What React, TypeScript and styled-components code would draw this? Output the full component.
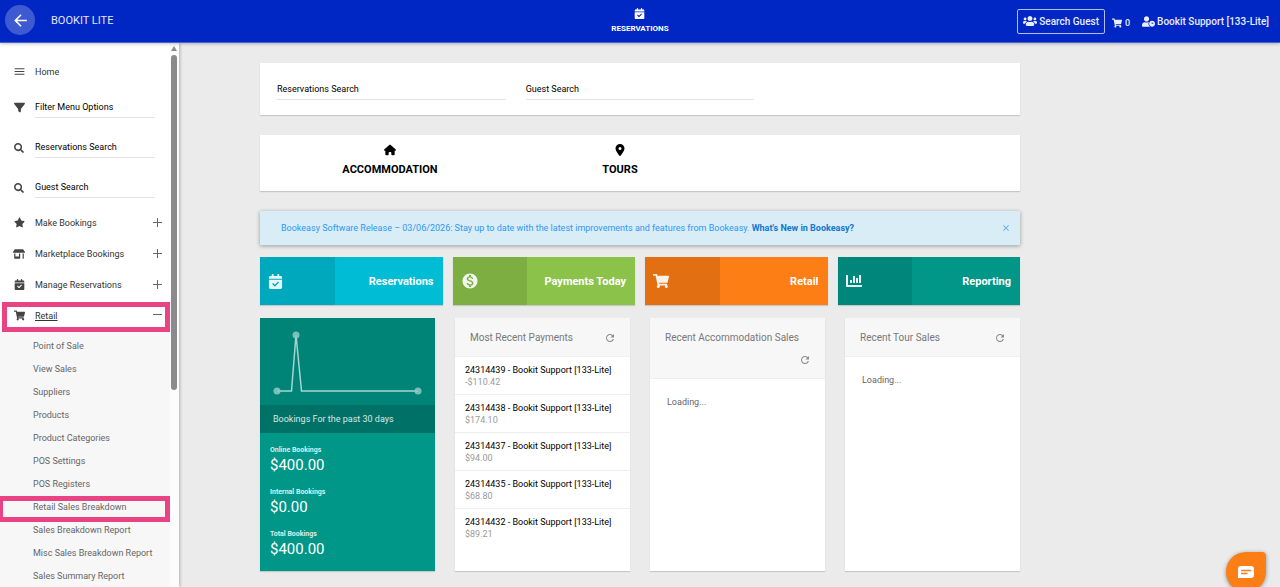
import React from "react";
import styled, { createGlobalStyle } from "styled-components";
import { FaCalendarCheck, FaFilter, FaHouse, FaLocationDot, FaStar } from "react-icons/fa6";
import { FaChartBar, FaSearch, FaShoppingCart, FaStoreAlt, FaUserClock, FaUsers } from "react-icons/fa";
import { MdArrowBack, MdClose, MdMenu, MdMonetizationOn, MdRefresh } from "react-icons/md";

const GlobalStyle = createGlobalStyle`
  *, *::before, *::after { box-sizing: border-box; }
  body {
    margin: 0;
    background: #ebebeb;
    color: #000;
    font-family: Roboto, "Liberation Sans", sans-serif;
    font-size: 9px;
  }
  button, input { font: inherit; color: inherit; }
  button { border: 0; padding: 0; background: none; cursor: pointer; }
  a { color: inherit; text-decoration: none; }
  ul { list-style: none; margin: 0; padding: 0; }
  h2, p { margin: 0; }
  svg { display: block; flex: none; }
`;

const Shell = styled.div`
  display: flex;
  flex-direction: column;
  height: 100vh;
  overflow: hidden;
`;

/* Top bar */

const TopBar = styled.header`
  display: grid;
  grid-template-columns: 1fr auto 1fr;
  align-items: center;
  flex: none;
  height: 43px;
  padding: 0 5px 2px;
  background: #0026c4;
  border-bottom: 1px solid #4a62cc;
  box-shadow: 0 1px 3px rgba(0, 0, 0, 0.25);
  color: #fff;
  position: relative;
  z-index: 2;
`;

const Brand = styled.div`
  display: flex;
  align-items: center;
  gap: 16px;
  font-size: 11px;
  color: #e3e8fa;
`;

const BackButton = styled.button`
  display: grid;
  place-items: center;
  width: 30px;
  height: 30px;
  border-radius: 50%;
  background: #3e5ad3;
  color: #fff;
`;

const TopLink = styled.a`
  display: flex;
  flex-direction: column;
  align-items: center;
  gap: 4px;
  padding-top: 3px;
  font-size: 8px;
  line-height: 12px;
  font-weight: 700;
`;

const Account = styled.div`
  display: flex;
  align-items: center;
  justify-content: flex-end;
  padding: 2px 6px 0 0;
  font-size: 10px;
  font-weight: 500;
  color: #e9edfb;
`;

const GuestButton = styled.button`
  display: flex;
  align-items: center;
  gap: 2px;
  height: 25px;
  padding: 0 5px;
  border: 1px solid #b3beee;
  border-radius: 2px;
`;

const CartLink = styled.a`
  display: flex;
  align-items: center;
  gap: 3px;
  margin: 3px 12px 0 7px;
  font-size: 9px;
`;

const UserLink = styled.a`
  display: flex;
  align-items: center;
  gap: 2px;
`;

/* Sidebar */

const Body = styled.div`
  display: flex;
  flex: 1;
  min-height: 0;
`;

const Sidebar = styled.aside`
  display: flex;
  flex: none;
  width: 179px;
  background: #fff;
  box-shadow: 1px 0 3px rgba(0, 0, 0, 0.25);
`;

const Menu = styled.nav`
  flex: 1;
  min-width: 0;
  padding-top: 14px;
  overflow: hidden;
  color: #333;
`;

const ScrollTrack = styled.div`
  display: flex;
  flex-direction: column;
  align-items: center;
  width: 9px;
  padding: 3px 2px 0 0;
  background: #fcfcfc;
`;

const ScrollThumb = styled.div`
  width: 6px;
  height: 62%;
  margin-top: 3px;
  border-radius: 3px;
  background: #8b8b8b;
`;

const MenuIcon = styled.i`
  display: grid;
  place-items: center;
  flex: none;
  width: 12px;
  color: #444;
`;

const HomeLink = styled.a`
  display: flex;
  align-items: center;
  gap: 10px;
  height: 29px;
  padding-left: 13px;
`;

const Field = styled.label`
  display: flex;
  align-items: center;
  gap: 10px;
  height: 40px;
  padding: 11px 15px 8px 13px;
`;

const LineInput = styled.input`
  flex: 1;
  min-width: 0;
  width: 100%;
  height: 21px;
  padding: 0;
  border: 0;
  border-bottom: 1px solid #e2e2e2;
  border-radius: 0;
  background: transparent;
  outline: 0;
  &::placeholder { color: #000; opacity: 1; }
`;

const Groups = styled.div`
  padding-top: 1px;
`;

const Group = styled.button<{ $open?: boolean }>`
  position: relative;
  display: flex;
  align-items: center;
  gap: 10px;
  width: 100%;
  height: 31px;
  padding: 0 8px 0 13px;
  text-align: left;
  span { flex: 1; text-decoration: ${(p) => (p.$open ? "underline" : "none")}; }
`;

const Submenu = styled.ul`
  padding-top: 4px;
  background: #f7f7f7;
  color: #666;
`;

const SubItem = styled.li`
  position: relative;
`;

const SubLink = styled.a`
  display: block;
  padding-left: 33px;
  line-height: 23px;
`;

const Marker = styled.i<{ $inset: string }>`
  position: absolute;
  inset: ${(p) => p.$inset};
  border: 5px solid #e94383;
  pointer-events: none;
`;

/* Main column */

const Main = styled.main`
  flex: 1;
  min-width: 0;
  overflow: hidden auto;
  scrollbar-width: none;
  padding: 20px 179px 16px 0;
`;

const Content = styled.div`
  max-width: 760px;
  margin: 0 auto;
`;

const Panel = styled.section`
  background: #fff;
  box-shadow: 0 1px 1px rgba(0, 0, 0, 0.15);
`;

const SearchPanel = styled(Panel)`
  display: grid;
  grid-template-columns: repeat(3, 1fr);
  gap: 20px;
  padding: 16px 17px 15px;
`;

const TypePanel = styled(Panel)`
  display: grid;
  grid-template-columns: repeat(3, 1fr);
  height: 56px;
  margin: 20px 0;
  padding: 9px 55px 0 15px;
`;

const TypeLink = styled.a`
  display: flex;
  flex-direction: column;
  align-items: center;
  gap: 7px;
  font-size: 11px;
  line-height: 14px;
  font-weight: 700;
`;

const Notice = styled.div`
  display: flex;
  align-items: center;
  height: 34px;
  padding: 0 9px 0 21px;
  border-radius: 1px;
  background: #d9edf7;
  box-shadow: 0 1px 4px rgba(0, 0, 0, 0.35);
  color: #2f97f3;
  p { flex: 1; }
  a { color: #1177cf; font-weight: 700; }
  button { color: #5aa8ec; }
`;

const Tiles = styled.div`
  display: grid;
  grid-template-columns: repeat(4, 1fr);
  gap: 10px;
  margin: 12px 0 13px;
`;

const Tile = styled.a<{ $dark: string; $light: string }>`
  display: flex;
  height: 48px;
  background: ${(p) => p.$light};
  box-shadow: 0 1px 1px rgba(0, 0, 0, 0.15);
  color: #fff;
  font-size: 11px;
  font-weight: 700;
  i {
    display: flex;
    align-items: center;
    width: 41%;
    padding-left: 8px;
    background: ${(p) => p.$dark};
    color: rgba(255, 255, 255, 0.9);
  }
  span {
    flex: 1;
    padding: 1px 9px 0 0;
    text-align: right;
    line-height: 47px;
  }
`;

const Cards = styled.div`
  display: grid;
  grid-template-columns: repeat(4, 1fr);
  gap: 20px;
  min-height: 253px;
`;

const ChartCard = styled(Panel)`
  background: #009688;
  color: #fff;
`;

const Chart = styled.svg`
  width: 100%;
  height: 87px;
  background: #008477;
`;

const ChartTitle = styled.h2`
  padding: 1px 0 0 13px;
  background: #007166;
  color: #d5e9e7;
  font-size: 9px;
  font-weight: 400;
  line-height: 27px;
`;

const Stats = styled.dl`
  display: grid;
  gap: 12px;
  margin: 0;
  padding: 12px 10px;
  dt { font-size: 7px; font-weight: 700; line-height: 10px; color: #d9efed; }
  dd { margin: 0; font-size: 15px; line-height: 20px; }
`;

const CardHead = styled.div`
  display: flex;
  flex-wrap: wrap;
  align-items: center;
  padding: 9px 14px 7px 15px;
  background: #f7f7f7;
  border-bottom: 1px solid #eee;
  color: #777;
  h2 { margin-right: 10px; font-size: 10px; font-weight: 400; line-height: 22px; }
  button { display: grid; place-items: center; height: 22px; margin-left: auto; color: #888; }
`;

const Payment = styled.li`
  height: 38px;
  padding: 7px 10px 0;
  line-height: 12px;
  border-bottom: 1px solid #eee;
  color: #9a9a9a;
  &:last-child { border-bottom: 0; }
  a { display: block; color: #000; }
`;

const Loading = styled.p`
  padding: 17px;
  line-height: 12px;
  color: #666;
`;

const ChatButton = styled.button`
  position: fixed;
  right: 14px;
  bottom: -5px;
  display: grid;
  place-items: center;
  width: 40px;
  height: 40px;
  border-radius: 20px 4px 20px 20px;
  background: #fd7e14;
  box-shadow: 0 1px 4px rgba(0, 0, 0, 0.4);
`;

const groups = [
  { label: "Make Bookings", icon: <FaStar size={11} /> },
  { label: "Marketplace Bookings", icon: <FaStoreAlt size={12} /> },
  { label: "Manage Reservations", icon: <FaCalendarCheck size={11} /> },
  { label: "Retail", icon: <FaShoppingCart size={11} />, open: true },
];

const retailLinks = [
  "Point of Sale",
  "View Sales",
  "Suppliers",
  "Products",
  "Product Categories",
  "POS Settings",
  "POS Registers",
  "Retail Sales Breakdown",
  "Sales Breakdown Report",
  "Misc Sales Breakdown Report",
  "Sales Summary Report",
];

const tiles = [
  { label: "Reservations", dark: "#00a8be", light: "#00bcd4", icon: <FaCalendarCheck size={15} /> },
  { label: "Payments Today", dark: "#7cae41", light: "#8bc34a", icon: <MdMonetizationOn size={18} /> },
  { label: "Retail", dark: "#e27012", light: "#fd7e14", icon: <FaShoppingCart size={16} /> },
  { label: "Reporting", dark: "#00867a", light: "#009688", icon: <FaChartBar size={16} /> },
];

const stats = [
  ["Online Bookings", "$400.00"],
  ["Internal Bookings", "$0.00"],
  ["Total Bookings", "$400.00"],
];

const payments = [
  ["24314439", "-$110.42"],
  ["24314438", "$174.10"],
  ["24314437", "$94.00"],
  ["24314435", "$68.80"],
  ["24314432", "$89.21"],
];

function Toggle({ open }: { open?: boolean }) {
  return (
    <svg width="9" height="9" viewBox="0 0 9 9" stroke="#666" fill="none" aria-hidden>
      <path d={open ? "M0 3.5H9" : "M0 4.5H9M4.5 0V9"} />
    </svg>
  );
}

function CardHeader({ title }: { title: string }) {
  return (
    <CardHead>
      <h2>{title}</h2>
      <button aria-label={`Refresh ${title}`}>
        <MdRefresh size={12} />
      </button>
    </CardHead>
  );
}

export default function App() {
  return (
    <Shell>
      <GlobalStyle />
      <TopBar>
        <Brand>
          <BackButton aria-label="Back">
            <MdArrowBack size={19} />
          </BackButton>
          <span>BOOKIT LITE</span>
        </Brand>
        <TopLink href="#">
          <FaCalendarCheck size={11} />
          RESERVATIONS
        </TopLink>
        <Account>
          <GuestButton>
            <FaUsers size={14} />
            Search Guest
          </GuestButton>
          <CartLink href="#">
            <FaShoppingCart size={10} />0
          </CartLink>
          <UserLink href="#">
            <FaUserClock size={13} />
            Bookit Support [133-Lite]
          </UserLink>
        </Account>
      </TopBar>
      <Body>
        <Sidebar>
          <Menu>
            <HomeLink href="#">
              <MenuIcon>
                <MdMenu size={13} />
              </MenuIcon>
              Home
            </HomeLink>
            <Field>
              <MenuIcon>
                <FaFilter size={11} />
              </MenuIcon>
              <LineInput placeholder="Filter Menu Options" aria-label="Filter Menu Options" />
            </Field>
            <Field>
              <MenuIcon>
                <FaSearch size={10} />
              </MenuIcon>
              <LineInput placeholder="Reservations Search" aria-label="Reservations Search" />
            </Field>
            <Field>
              <MenuIcon>
                <FaSearch size={10} />
              </MenuIcon>
              <LineInput placeholder="Guest Search" aria-label="Guest Search" />
            </Field>
            <Groups>
              {groups.map((g) => (
                <Group key={g.label} $open={g.open} aria-expanded={!!g.open}>
                  <MenuIcon>{g.icon}</MenuIcon>
                  <span>{g.label}</span>
                  <Toggle open={g.open} />
                  {g.open && <Marker $inset="2px 0 -1px 2px" />}
                </Group>
              ))}
            </Groups>
            <Submenu>
              {retailLinks.map((label) => (
                <SubItem key={label}>
                  <SubLink href="#">{label}</SubLink>
                  {label === "Retail Sales Breakdown" && <Marker $inset="0 0 -3px -2px" />}
                </SubItem>
              ))}
            </Submenu>
          </Menu>
          <ScrollTrack aria-hidden>
            <svg width="6" height="6" viewBox="0 0 6 6" fill="#8b8b8b">
              <path d="M3 0L6 5H0Z" />
            </svg>
            <ScrollThumb />
          </ScrollTrack>
        </Sidebar>
        <Main>
          <Content>
            <SearchPanel>
              <LineInput placeholder="Reservations Search" aria-label="Reservations Search" />
              <LineInput placeholder="Guest Search" aria-label="Guest Search" />
            </SearchPanel>
            <TypePanel>
              <TypeLink href="#">
                <FaHouse size={12} />
                ACCOMMODATION
              </TypeLink>
              <TypeLink href="#">
                <FaLocationDot size={12} />
                TOURS
              </TypeLink>
            </TypePanel>
            <Notice role="status">
              <p>
                Bookeasy Software Release – 03/06/2026: Stay up to date with the latest improvements and features
                from Bookeasy. <a href="#">What's New in Bookeasy?</a>
              </p>
              <button aria-label="Dismiss">
                <MdClose size={10} />
              </button>
            </Notice>
            <Tiles>
              {tiles.map((t) => (
                <Tile key={t.label} href="#" $dark={t.dark} $light={t.light}>
                  <i>{t.icon}</i>
                  <span>{t.label}</span>
                </Tile>
              ))}
            </Tiles>
            <Cards>
              <ChartCard>
                <Chart viewBox="0 0 175 87" preserveAspectRatio="none" aria-label="Bookings chart">
                  <path
                    d="M17 73H31.5L36 17L41.500 73H158"
                    fill="none"
                    stroke="#a9d3cf"
                    strokeWidth="1.5"
                  />
                  <g fill="#8cc9c3" fillOpacity="0.85">
                    <circle cx="17" cy="73" r="3.500" />
                    <circle cx="36" cy="17" r="3.500" />
                    <circle cx="158" cy="73" r="3.500" />
                  </g>
                </Chart>
                <ChartTitle>Bookings For the past 30 days</ChartTitle>
                <Stats>
                  {stats.map(([label, value]) => (
                    <div key={label}>
                      <dt>{label}</dt>
                      <dd>{value}</dd>
                    </div>
                  ))}
                </Stats>
              </ChartCard>
              <Panel>
                <CardHeader title="Most Recent Payments" />
                <ul>
                  {payments.map(([id, amount]) => (
                    <Payment key={id}>
                      <a href="#">{id} - Bookit Support [133-Lite]</a>
                      {amount}
                    </Payment>
                  ))}
                </ul>
              </Panel>
              <Panel>
                <CardHeader title="Recent Accommodation Sales" />
                <Loading>Loading...</Loading>
              </Panel>
              <Panel>
                <CardHeader title="Recent Tour Sales" />
                <Loading>Loading...</Loading>
              </Panel>
            </Cards>
          </Content>
        </Main>
      </Body>
      <ChatButton aria-label="Open chat">
        <svg width="16" height="12" viewBox="0 0 16 12">
          <path d="M3 0H13A3 3 0 0 1 16 3V9A3 3 0 0 1 13 12H0V3A3 3 0 0 1 3 0Z" fill="#fff" />
          <path d="M3 4.500H13M3 7.500H9.500" stroke="#fd7e14" strokeWidth="1.300" />
        </svg>
      </ChatButton>
    </Shell>
  );
}
